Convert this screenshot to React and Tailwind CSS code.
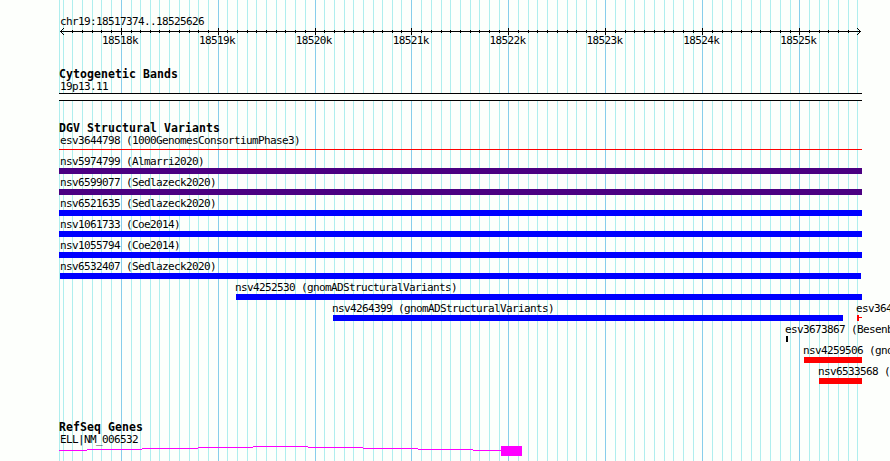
const MAJOR = [121, 218, 315, 411, 508, 605, 702, 799];
const MINOR = [
  63, 72, 82, 92, 101, 111, 131, 140, 150, 159, 169, 179, 189, 198, 208,
  227, 237, 247, 256, 266, 276, 285, 295, 305, 324, 334, 344, 353, 363, 373,
  382, 392, 401, 421, 431, 441, 450, 460, 470, 479, 489, 499, 518, 528, 537,
  547, 557, 567, 576, 586, 596, 615, 625, 634, 644, 654, 664, 673, 683, 693,
  712, 722, 731, 741, 751, 760, 770, 780, 790, 809, 819, 828, 838, 848, 857,
];

const VARIANTS = [
  { name: 'nsv5974799 (Almarri2020)', start: 59, end: 862, color: 'bg-[#4b0082]' },
  { name: 'nsv6599077 (Sedlazeck2020)', start: 59, end: 862, color: 'bg-[#4b0082]' },
  { name: 'nsv6521635 (Sedlazeck2020)', start: 59, end: 862, color: 'bg-[#0000ff]' },
  { name: 'nsv1061733 (Coe2014)', start: 59, end: 862, color: 'bg-[#0000ff]' },
  { name: 'nsv1055794 (Coe2014)', start: 59, end: 862, color: 'bg-[#0000ff]' },
  { name: 'nsv6532407 (Sedlazeck2020)', start: 60, end: 861, label: 60, color: 'bg-[#0000ff]' },
  { name: 'nsv4252530 (gnomADStructuralVariants)', start: 236, end: 862, label: 235, color: 'bg-[#0000ff]' },
];

// Intron line of the gene, one pixel step per segment
const INTRON = [
  [59, 87, 450], [87, 142, 449], [142, 198, 448], [198, 253, 447],
  [253, 308, 446], [308, 363, 447], [363, 418, 448], [418, 473, 449],
  [473, 501, 450],
];

function Label({ children }) {
  return (
    <div className="h-[13px] whitespace-pre font-['DejaVu_Sans_Mono',monospace] text-[11px] leading-[13px] tracking-[-0.622px] text-black">
      {children}
    </div>
  );
}

function Heading({ children }) {
  return (
    <h2 className="ml-[59px] h-[13px] whitespace-pre font-['DejaVu_Sans_Mono',monospace] text-[11.5px] font-bold leading-[13px] tracking-[0.077px] text-black">
      {children}
    </h2>
  );
}

function Grid() {
  return (
    <svg className="absolute inset-0" width="890" height="461" shapeRendering="crispEdges">
      {[59, ...MINOR].map((x) => (
        <rect key={x} x={x} y="0" width="1" height="461" fill="#afeeee" />
      ))}
      {MAJOR.map((x) => (
        <rect key={x} x={x} y="0" width="1" height="461" fill="#87ceeb" />
      ))}
    </svg>
  );
}

function Ruler() {
  return (
    <svg className="block" width="890" height="8" viewBox="0 28 890 8" shapeRendering="crispEdges">
      <rect x="60" y="31" width="801" height="1" />
      {MINOR.filter((x) => x > 63 && x < 857).map((x) => (
        <rect key={x} x={x} y="30" width="1" height="3" />
      ))}
      {MAJOR.map((x) => (
        <rect key={x} x={x} y="28" width="1" height="7" />
      ))}
      {[1, 2, 3].map((d) => (
        <g key={d}>
          <rect x={60 + d} y={31 - d} width="1" height="1" />
          <rect x={60 + d} y={31 + d} width="1" height="1" />
          <rect x={860 - d} y={31 - d} width="1" height="1" />
          <rect x={860 - d} y={31 + d} width="1" height="1" />
        </g>
      ))}
    </svg>
  );
}

function Variant({ name, start, end, color, label = 60 }) {
  return (
    <div className="h-[21px]">
      <div style={{ marginLeft: label }}>
        <Label>{name}</Label>
      </div>
      <div className={`h-[6px] ${color}`} style={{ marginLeft: start, width: end - start }} />
    </div>
  );
}

export default function App() {
  return (
    <main className="relative h-[461px] w-[890px] overflow-hidden bg-[#fdfffc]">
      <Grid />
      <div className="relative pt-[15px]">
        <div className="ml-[60px]">
          <Label>chr19:18517374..18525626</Label>
        </div>
        <Ruler />
        <div className="-mt-[2px] ml-[102px] flex">
          {MAJOR.map((x, i) => (
            <div key={x} className="w-[96.9px] shrink-0">
              <Label>{`${18518 + i}k`}</Label>
            </div>
          ))}
        </div>

        <section className="mt-[21px]">
          <Heading>Cytogenetic Bands</Heading>
          <div className="-mt-px ml-[60px]">
            <Label>19p13.11</Label>
          </div>
          <div className="ml-[59px] h-[8px] w-[803px] border-y border-black bg-[#fdfffc]" />
        </section>

        <section className="mt-[21px]">
          <Heading>DGV Structural Variants</Heading>
          <div className="-mt-px ml-[60px]">
            <Label>esv3644798 (1000GenomesConsortiumPhase3)</Label>
          </div>
          <div className="ml-[59px] mt-[2px] h-px w-[803px] bg-[#ff0000]" />
          <div className="mt-[5px]">
            {VARIANTS.map((v) => (
              <Variant key={v.name} {...v} />
            ))}

            <div className="h-[21px]">
              <div className="flex">
                <div className="ml-[332px] w-[524px] shrink-0">
                  <Label>nsv4264399 (gnomADStructuralVariants)</Label>
                </div>
                <Label>esv3644799</Label>
              </div>
              <div className="flex">
                <div className="ml-[333px] h-[6px] w-[510px] bg-[#0000ff]" />
                <div className="ml-[14px] h-[6px] w-[2px] bg-[#ff0000]" />
                <div className="mt-[2px] h-px w-[3px] bg-[#ff0000]" />
              </div>
            </div>

            <Variant name="esv3673867 (Besenbacher2016)" start={786} end={788} label={785} color="bg-black" />
            <Variant name="nsv4259506 (gnomADStructuralVariants)" start={804} end={862} label={803} color="bg-[#ff0000]" />
            <Variant name="nsv6533568 (Sedlazeck2020)" start={819} end={862} label={818} color="bg-[#ff0000]" />
          </div>
        </section>

        <section className="mt-[35px]">
          <Heading>RefSeq Genes</Heading>
          <div className="-mt-px ml-[60px]">
            <Label>ELL|NM_006532</Label>
          </div>
          <svg className="block" width="890" height="15" viewBox="0 446 890 15" shapeRendering="crispEdges">
            {INTRON.map(([x1, x2, y]) => (
              <rect key={x1} x={x1} y={y} width={x2 - x1} height="1" fill="#ff00ff" />
            ))}
            <rect x="501" y="446" width="21" height="10" fill="#ff00ff" />
          </svg>
        </section>
      </div>
    </main>
  );
}
